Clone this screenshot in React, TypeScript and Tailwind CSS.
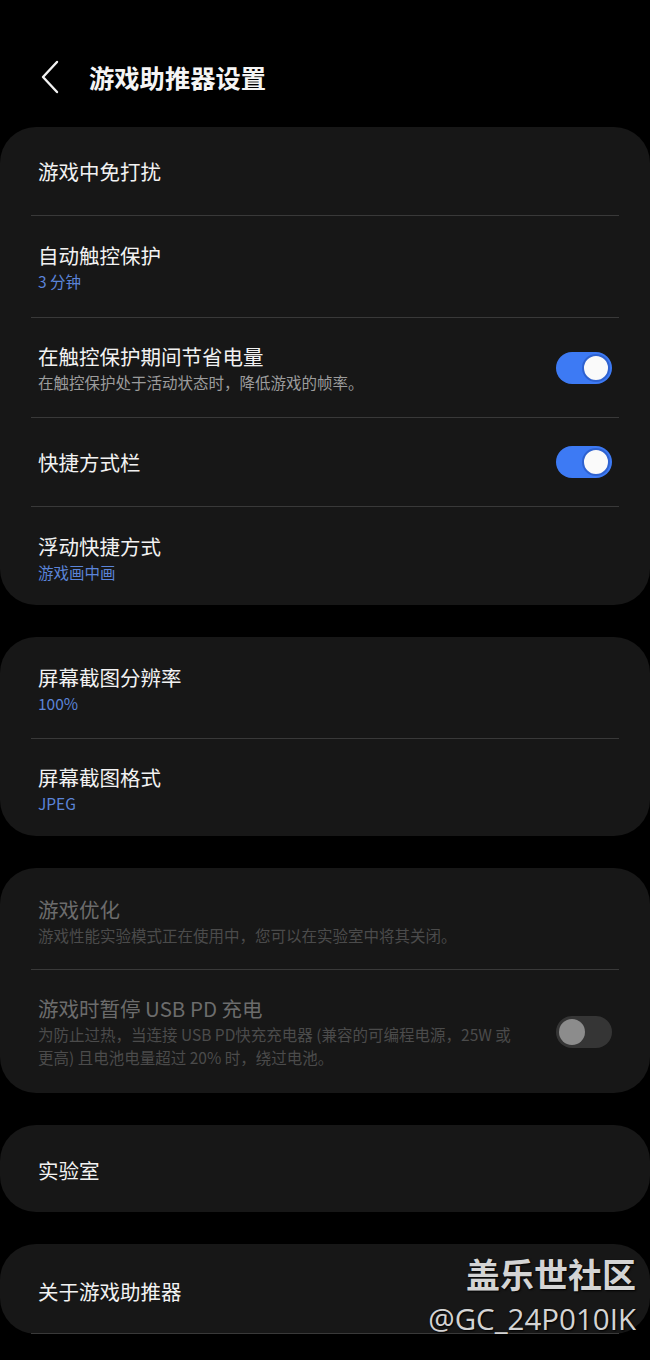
import React from "react";

const font = { fontFamily: '"Noto Sans CJK SC", "Noto Sans", sans-serif' };

type Row = {
  title: string;
  sub?: React.ReactNode;
  subTone?: "blue" | "gray";
  toggle?: "on" | "off";
  disabled?: boolean;
  height: string;
};

function Toggle({ on }: { on: boolean }) {
  return on ? (
    <div className="flex h-[32px] w-[56px] shrink-0 items-center justify-end rounded-full bg-[#3d7af4] px-[2px]">
      <div className="h-[28px] w-[28px] rounded-full border-2 border-[#2f62d0] bg-[#fafafa]" />
    </div>
  ) : (
    <div className="flex h-[32px] w-[56px] shrink-0 items-center justify-start rounded-full bg-[#353535] px-[3px]">
      <div className="h-[26px] w-[26px] rounded-full bg-[#8c8c8c]" />
    </div>
  );
}

function Card({ rows, lastDivider }: { rows: Row[]; lastDivider?: boolean }) {
  return (
    <div className="rounded-[36px] bg-[#171717]">
      {rows.map((r, i) => (
        <div key={r.title}>
          {i > 0 && <div className="mx-[31px] h-px bg-[#393939]" />}
          <div className={`flex items-center px-[38px] ${r.height}`}>
            <div className="flex flex-1 flex-col items-start pr-[28px]">
              <div
                className={`text-[20.5px] leading-[28px] ${
                  r.disabled ? "text-[#6c6c6c]" : "text-[#f2f2f2]"
                }`}
              >
                {r.title}
              </div>
              {r.sub && (
                <div
                  className={`mt-[1px] text-[15.5px] leading-[23px] ${
                    r.disabled
                      ? "text-[#4b4b4b]"
                      : r.subTone === "gray"
                      ? "text-[#9c9c9c]"
                      : "text-[#5b84d9]"
                  }`}
                >
                  {r.sub}
                </div>
              )}
            </div>
            {r.toggle && <Toggle on={r.toggle === "on"} />}
          </div>
        </div>
      ))}
      {lastDivider && <div className="mx-[31px] h-px bg-[#393939]" />}
    </div>
  );
}

export default function App() {
  return (
    <div className="relative h-[1360px] w-[650px] overflow-hidden bg-black" style={font}>
      {/* Header */}
      <div className="flex h-[127px] items-start pt-[58px] pl-[40px]">
        <svg width="20" height="36" viewBox="0 0 20 36" className="mt-[1px]">
          <path d="M17 3 L3 18 L17 33" fill="none" stroke="#f2f2f2" strokeWidth="2.4" strokeLinecap="round" strokeLinejoin="round" />
        </svg>
        <h1 className="ml-[29px] text-[25.3px] font-bold leading-[38px] text-[#f5f5f5]">游戏助推器设置</h1>
      </div>

      <div className="flex flex-col gap-[32px]">
        <Card
          rows={[
            { title: "游戏中免打扰", height: "h-[88px]" },
            { title: "自动触控保护", sub: "3 分钟", height: "h-[101px]" },
            {
              title: "在触控保护期间节省电量",
              sub: "在触控保护处于活动状态时，降低游戏的帧率。",
              subTone: "gray",
              toggle: "on",
              height: "h-[99px]",
            },
            { title: "快捷方式栏", toggle: "on", height: "h-[88px]" },
            { title: "浮动快捷方式", sub: "游戏画中画", height: "h-[98px] pt-[4px]" },
          ]}
        />
        <Card
          rows={[
            { title: "屏幕截图分辨率", sub: "100%", height: "h-[101px] pt-[3px]" },
            { title: "屏幕截图格式", sub: "JPEG", height: "h-[97px] pt-[3px]" },
          ]}
        />
        <Card
          rows={[
            {
              title: "游戏优化",
              sub: "游戏性能实验模式正在使用中，您可以在实验室中将其关闭。",
              disabled: true,
              height: "h-[101px] pt-[4px]",
            },
            {
              title: "游戏时暂停 USB PD 充电",
              sub: (
                <>
                  为防止过热，当连接 USB PD快充充电器 (兼容的可编程电源，25W 或
                  <br />
                  更高) 且电池电量超过 20% 时，绕过电池。
                </>
              ),
              toggle: "off",
              disabled: true,
              height: "h-[123px]",
            },
          ]}
        />
        <Card rows={[{ title: "实验室", height: "h-[87px] pt-[3px]" }]} />
        <Card rows={[{ title: "关于游戏助推器", height: "h-[89px] pt-[5px]" }]} lastDivider />
      </div>

      {/* Watermark overlay */}
      <div className="absolute right-[14px] top-[1254px] flex flex-col items-end gap-[7px]">
        <div className="text-[34px] font-bold leading-[40px] text-[#d4d4d4] [text-shadow:1px_1px_2px_#000]">盖乐世社区</div>
        <div
          className="text-[29.5px] leading-[36px] text-[#d4d4d4] [text-shadow:1px_1px_2px_#000]"
          style={{ fontFamily: '"Open Sans", "Noto Sans", sans-serif' }}
        >
          @GC_24P010IK
        </div>
      </div>
    </div>
  );
}
